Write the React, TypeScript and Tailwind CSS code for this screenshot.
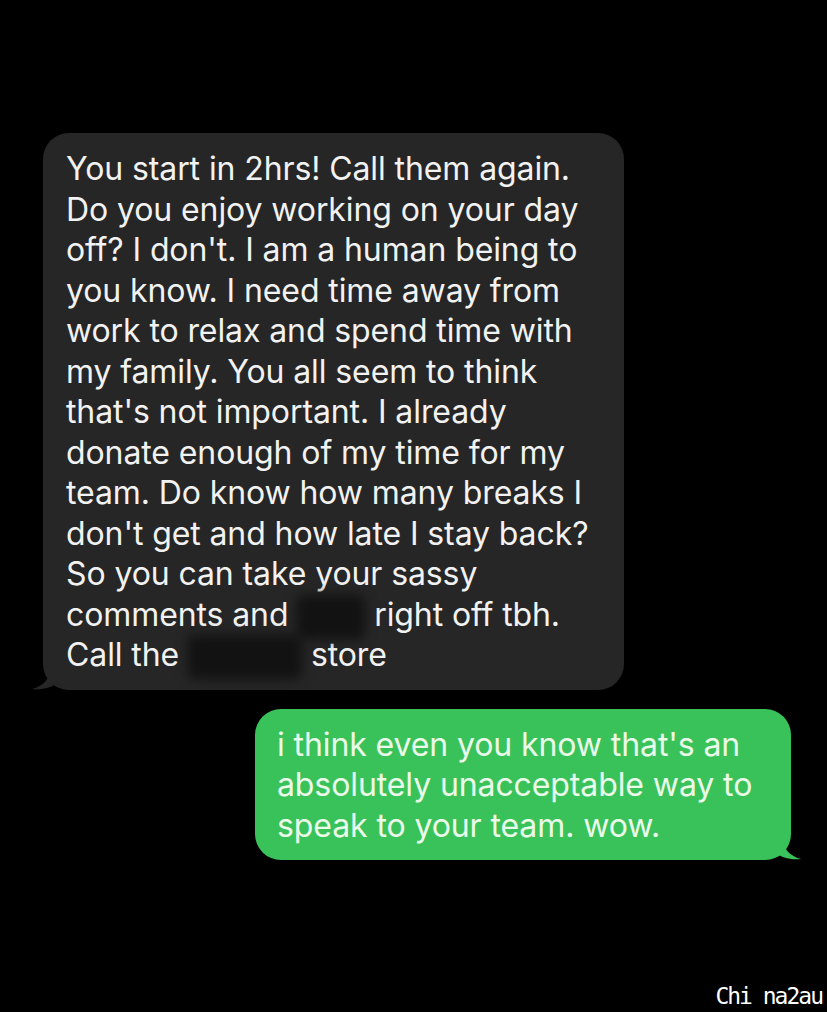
import React from 'react'

const grayLines = [
  "You start in 2hrs! Call them again.",
  "Do you enjoy working on your day",
  "off? I don't. I am a human being to",
  "you know. I need time away from",
  "work to relax and spend time with",
  "my family. You all seem to think",
  "that's not important. I already",
  "donate enough of my time for my",
  "team. Do know how many breaks I",
  "don't get and how late I stay back?",
  "So you can take your sassy",
]

const greenLines = [
  "i think even you know that's an",
  "absolutely unacceptable way to",
  "speak to your team. wow.",
]

const Blur = ({ w }: { w: string }) => (
  <span className={`inline-block ${w} h-[44px] align-middle -my-2 rounded-md bg-[#121212] blur-[6px]`} />
)

const App = () => {
  return (
    <div className="w-[827px] h-[1012px] bg-black flex flex-col font-['Inter','Liberation_Sans',sans-serif] relative overflow-hidden">
      <div className="pt-[133px] pl-[43px]">
        <div className="relative w-[581px] bg-[#262626] rounded-[26px] pl-[23px] pr-4 pt-[16px] pb-[14px] text-[#f2f2f2] text-[32px] leading-[40.5px] tracking-[-0.1px]">
          {grayLines.map((l) => (
            <div key={l} className="whitespace-nowrap">{l}</div>
          ))}
          <div className="whitespace-nowrap">
            comments and <Blur w="w-[68px]" /> right off tbh.
          </div>
          <div className="whitespace-nowrap">
            Call the <Blur w="w-[114px]" /> store
          </div>
          <svg className="absolute left-[-11px] bottom-0" width="30" height="22" viewBox="0 0 30 22">
            <path d="M18 0 C18 10 12 18 0 21 C10 22 20 20 26 14 L30 0 Z" fill="#262626" />
          </svg>
        </div>
      </div>

      <div className="pt-[19px] pl-[255px]">
        <div className="relative w-[536px] bg-[#3ac25a] rounded-[26px] pl-[22px] pt-[16px] pb-[14px] text-[#eafbe9] text-[32px] leading-[40.5px] tracking-[-0.1px]">
          {greenLines.map((l) => (
            <div key={l} className="whitespace-nowrap">{l}</div>
          ))}
          <svg className="absolute right-[-10px] bottom-0" width="30" height="22" viewBox="0 0 30 22">
            <path d="M12 0 C12 10 18 18 30 21 C20 22 10 20 4 14 L0 0 Z" fill="#3ac25a" />
          </svg>
        </div>
      </div>

      <div className="absolute right-[5px] bottom-[4px] text-white text-[23px] leading-none font-['DejaVu_Sans_Mono','Liberation_Mono',monospace] tracking-[-2px]">
        Chi na2au
      </div>
    </div>
  )
}

export default App
